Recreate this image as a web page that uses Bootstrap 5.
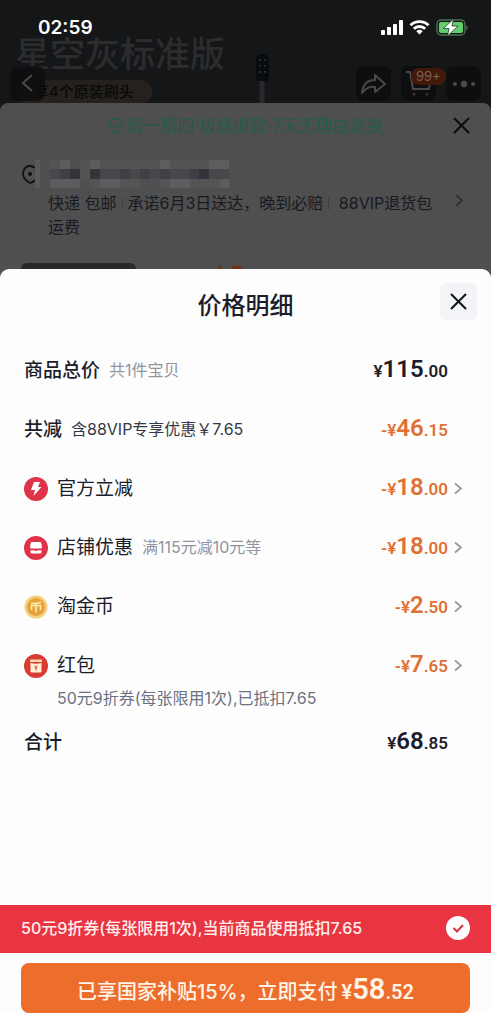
<!DOCTYPE html>
<html lang="zh-CN">
<head>
<meta charset="utf-8">
<meta name="viewport" content="width=device-width, initial-scale=1">
<title>价格明细</title>
<link href="https://cdn.jsdelivr.net/npm/bootstrap@5.3.0/dist/css/bootstrap.min.css" rel="stylesheet">
<style>
  body { font-family: Inter, "Noto Sans CJK SC", sans-serif; color: #1b1d2b; background: #fff; padding-right: 9px; }
  svg { display: block; flex: none; }
  button { border: 0; padding: 0; background: none; color: inherit; }
  .app { min-height: 100vh; background: #4f4f4f; }
  .hero { height: 103px; background: #151618; }
  .clock { font-size: 19px; line-height: 24px; font-weight: 600; color: #fff; top: 16px; left: 38px; }
  .signals { top: 19px; right: 21px; gap: 6px; }
  .hero-title { font-size: 35px; line-height: 40px; font-weight: 500; color: #2b2c2e; padding: 34px 0 0 15px; }
  .gift { font-size: 15px; line-height: 23px; font-weight: 500; color: #08090a; background: #26211d; border-radius: 11px; margin: 6px 0 0 16px; padding: 0 18px; }
  .brush { left: 51%; top: 52px; }
  .toolbar { top: 66px; left: 10px; right: 10px; color: #48494b; }
  .tool { width: 35px; height: 35px; border-radius: 8px; background: rgba(12, 13, 15, .8); display: flex; align-items: center; justify-content: center; }
  .tool-group { gap: 10px; }
  .count { top: 2px; left: 10px; padding: 0 5px; font-size: 13px; line-height: 17px; border-radius: 8px; background: #411a0c; color: #806052; }
  .under { background: #4f4f4f; border-radius: 8px 8px 0 0; margin-top: -8px; position: relative; }
  .hero-pad { height: 111px; }
  .promise { height: 45px; font-size: 17px; line-height: 24px; color: #265c48; gap: 2px; }
  .promise-close { top: 14px; right: 21px; color: #0c0c0d; }
  .delivery { padding: 11px 26px 0 21px; }
  .delivery-text { font-size: 16px; line-height: 24px; color: #191922; padding: 2px 30px 0 27px; }
  .bar { display: inline-block; width: 1px; height: 13px; background: #404044; margin: 0 5px; vertical-align: -1px; }
  .delivery-go { right: 27px; top: 45px; }
  .goods { height: 6px; margin-top: 24px; gap: 78px; padding-left: 21px; }
  .thumb { width: 115px; background: #29292c; border-radius: 6px 6px 0 0; }
  .sheet { background: #fdfdfd; border-radius: 9px 9px 0 0; flex: 1; }
  .sheet-head { height: 73px; }
  .sheet-head h1 { font-size: 24px; line-height: 32px; font-weight: 500; }
  .close-box { top: 14px; right: 14px; width: 37px; height: 37px; border-radius: 5px; background: #f2f4f8; display: flex; align-items: center; justify-content: center; }
  .lines { padding: 14px 24px 60px; }
  .line { height: 29px; margin-bottom: 30px; width: 100%; text-align: left; font-size: 19px; line-height: 29px; }
  .line.total-line { margin-bottom: 0; }
  .line strong { font-weight: 500; }
  .line .note { font-size: 16px; margin-left: 9px; color: #9194a1; }
  .line .note-dark { color: #353846; }
  .line .icon { margin-right: 9px; }
  .line .go { margin-left: 6px; margin-right: 4px; }
  .amount { font-family: Roboto, "Liberation Sans", sans-serif; font-weight: 600; font-size: 17px; }
  .amount b { font-weight: 600; font-size: 24px; }
  .flat { margin-right: 19px; }
  .minus { color: #df7135; }
  .line.packet { margin-bottom: 6px; }
  .detail { font-size: 16px; line-height: 24px; color: #6c7282; padding-left: 33px; margin-bottom: 18px; }
  .coupon { background: #e93442; color: #fff0ee; font-size: 16px; line-height: 22px; font-weight: 500; height: 48px; padding: 0 21px 2px; }
  .pay-wrap { background: #fdfdfd; padding: 10px 21px 0; }
  .pay { width: 100%; height: 50px; border-radius: 8px; background: #ed6d2c; color: #fff4e6; font-size: 20px; line-height: 30px; font-weight: 500; padding-top: 4px; }
  .pay .amount { font-size: 20px; margin-left: 4px; }
  .pay .amount b { font-size: 29px; }
</style>
</head>
<body>
<div class="app d-flex flex-column">
  <header class="hero hero-pad position-relative">
    <div class="hero-title">星空灰标准版</div>
    <span class="gift d-inline-block">享4个原装刷头</span>
    <svg class="brush position-absolute" width="26" height="51"><rect x="6" y="2" width="13" height="28" rx="6" fill="#080b10"/><path d="M9 8h2M14 8h2M9 14h2M14 14h2M9 20h2M14 20h2" stroke="#252a31" stroke-width="2"/><path d="M12 29v22" stroke="#26282b" stroke-width="5"/></svg>
    <span class="clock position-absolute">02:59</span>
    <div class="signals position-absolute d-flex">
      <svg width="22" height="17" fill="#fff"><rect x="0" y="11" width="4" height="5" rx="1"/><rect x="6" y="8" width="4" height="8" rx="1"/><rect x="12" y="5" width="4" height="11" rx="1"/><rect x="18" y="1" width="4" height="15" rx="1"/></svg>
      <svg width="21" height="17" viewBox="0 0 21 17" fill="none" stroke="#fff" stroke-width="2.8"><path d="M1.5 6.2a13 13 0 0 1 18 0M4.8 9.8a8.2 8.2 0 0 1 11.4 0"/><path d="M10.5 15.5l-3.2-3.3a4.8 4.8 0 0 1 6.4 0z" fill="#fff" stroke="none"/></svg>
      <svg width="34" height="17" viewBox="0 0 34 17"><rect x="1" y="1" width="28" height="15" rx="4" fill="none" stroke="#4a7450" stroke-width="1.4"/><rect x="3" y="3" width="24" height="11" rx="2" fill="#62cf6c"/><path d="M30.500 6.500q2 2 0 4.500z" fill="#858786"/><path d="M17.500 0L7.500 9.500h5.500L11.500 17 22 7h-6z" fill="#fff" stroke="#253c2a" stroke-width=".8"/></svg>
    </div>
    <nav class="toolbar position-absolute d-flex justify-content-between">
      <button class="tool" aria-label="返回"><svg width="20" height="22" fill="none" stroke="currentColor" stroke-width="2"><path d="M14 2L5 10l9 8"/></svg></button>
      <div class="d-flex tool-group">
        <button class="tool" aria-label="分享"><svg width="27" height="24" fill="none" stroke="currentColor" stroke-width="2" stroke-linejoin="round"><path d="M15 3l10 9-10 8v-5C9 14 5 17 2 21 3 12 8 8 15 8z"/></svg></button>
        <button class="tool position-relative" aria-label="购物车"><svg width="27" height="27" fill="none" stroke="currentColor" stroke-width="2"><path d="M1 2h4l3 17h16l2-13H6"/><circle cx="9" cy="24" r="1.500" fill="#4b2c2b" stroke="none"/><circle cx="22" cy="24" r="1.500" fill="#4b2c2b" stroke="none"/></svg><span class="count position-absolute">99+</span></button>
        <button class="tool" aria-label="更多"><svg width="24" height="10" fill="currentColor"><circle cx="3" cy="5" r="2"/><circle cx="12" cy="5" r="3.200"/><circle cx="21" cy="5" r="2"/></svg></button>
      </div>
    </nav>
  </header>

  <section class="under">
    <div class="promise position-relative d-flex align-items-center justify-content-center">
      <svg width="16" height="18" fill="none" stroke="currentColor" stroke-width="1.500" stroke-linejoin="round"><path d="M8 1.500l6 2v5.500c0 3.500-2.500 5.800-6 7.500-3.500-1.700-6-4-6-7.500V3.500zM5 8.500l2.500 2.500L11.500 7"/></svg>
      <span>假一赔四·极速退款·7天无理由退换</span>
      <button class="promise-close position-absolute" aria-label="关闭"><svg width="17" height="17" fill="none" stroke="currentColor" stroke-width="2"><path d="M1 1l15 15M16 1L1 16"/></svg></button>
    </div>
    <div class="delivery position-relative">
      <svg width="210" height="30" aria-hidden="true">
        <path d="M14 21q-3 3-5 3c-3-2-7-4-7-9s3-8 7-8c2 0 4 1 5 2" fill="none" stroke="#111114" stroke-width="1.800"/><circle cx="9" cy="15" r="2" fill="#111114"/>
        <path d="M14 1h5v28h-5z" fill="#595959"/>
        <path d="M29 1h179v28H29z" fill="#545455"/>
        <path d="M39 1h10v10h-10zM69 1h10v10h-10zM139 1h10v10h-10zM188 1h20v10h-20zM29 20h30v9H29zM79 20h20v9H79zM149 20h20v9h-20zM199 20h9v9h-9z" fill="#5d5d60"/>
        <path d="M49 1h10v10H49zM59 20h10v9H59zM119 20h20v9h-20z" fill="#4f4f52"/>
        <path d="M29 10h10v10H29zM79 10h20v10H79zM109 10h10v10h-10zM129 10h10v10h-10zM149 10h19v10h-19zM188 10h20v10h-20z" fill="#47474c"/>
        <path d="M39 10h10v10H39zM99 10h10v10H99zM119 10h10v10h-10zM139 10h10v10h-10zM168 10h10v10h-10z" fill="#3f3f45"/>
        <path d="M49 10h10v10H49zM69 10h10v10H69zM178 10h10v10h-10z" fill="#33333a"/>
      </svg>
      <div class="delivery-text">快递 包邮<i class="bar"></i>承诺6月3日送达，晚到必赔<i class="bar"></i> 88VIP退货包<wbr>运费</div>
      <svg class="delivery-go position-absolute" width="10" height="15" fill="none" stroke="#29292d" stroke-width="1.500"><path d="M2 2l6 5.500L2 13"/></svg>
    </div>
    <div class="goods d-flex">
      <div class="thumb"></div>
      <svg width="32" height="6" fill="none" stroke="#75310f" stroke-width="3"><path d="M4 6l3-3M18 6q4-4 9 0"/></svg>
    </div>
  </section>

  <main class="sheet">
    <div class="sheet-head position-relative d-flex align-items-center justify-content-center">
      <h1 class="m-0">价格明细</h1>
      <button class="close-box position-absolute" aria-label="关闭"><svg width="17" height="17" fill="none" stroke="#11131b" stroke-width="2"><path d="M1 1l15 15M16 1L1 16"/></svg></button>
    </div>
    <div class="lines">
      <div class="line d-flex align-items-center"><strong>商品总价</strong><span class="note">共1件宝贝</span><span class="amount flat ms-auto">¥<b>115</b>.00</span></div>
      <div class="line d-flex align-items-center"><strong>共减</strong><span class="note note-dark">含88VIP专享优惠￥7.65</span><span class="amount minus flat ms-auto">-¥<b>46</b>.15</span></div>
      <button class="line d-flex align-items-center">
        <svg class="icon" width="24" height="24"><circle cx="12" cy="12" r="12" fill="#df3348"/><path d="M10 5h6l-2 5h3.500L9.500 19l1.500-6H7z" fill="#fff"/></svg>
        <span>官方立减</span><span class="amount minus ms-auto">-¥<b>18</b>.00</span>
        <svg class="go" width="9" height="13" fill="none" stroke="#999" stroke-width="1.700"><path d="M1 1.500l6 5-6 5"/></svg>
      </button>
      <button class="line d-flex align-items-center">
        <svg class="icon" width="24" height="24"><circle cx="12" cy="12" r="12" fill="#df3348"/><path d="M8 6h8q1 0 1.300 1l.7 4q0 1.500-1.500 1.500h-9Q6 12.500 6 11l.7-4Q7 6 8 6z" fill="#fff"/><path d="M6.500 14q1.500 1 3 0 1.200 1 2.500 1t2.500-1q1.500 1 3 0v2q0 1.500-1.500 1.500H8q-1.500 0-1.500-1.500z" fill="#fff"/></svg>
        <span>店铺优惠</span><span class="note">满115元减10元等</span><span class="amount minus ms-auto">-¥<b>18</b>.00</span>
        <svg class="go" width="9" height="13" fill="none" stroke="#999" stroke-width="1.700"><path d="M1 1.500l6 5-6 5"/></svg>
      </button>
      <button class="line d-flex align-items-center">
        <svg class="icon" width="24" height="24"><circle cx="12" cy="12" r="11.500" fill="#f5cf7c"/><circle cx="12" cy="12" r="9" fill="#e5a33f"/><path d="M7 8.500q5 0 10-1M12 8v9.500M7.500 15v-4.500h9V15" fill="none" stroke="#ffe9a8" stroke-width="1.600" stroke-linejoin="round"/></svg>
        <span>淘金币</span><span class="amount minus ms-auto">-¥<b>2</b>.50</span>
        <svg class="go" width="9" height="13" fill="none" stroke="#999" stroke-width="1.700"><path d="M1 1.500l6 5-6 5"/></svg>
      </button>
      <button class="line packet d-flex align-items-center">
        <svg class="icon" width="24" height="24"><circle cx="12" cy="12" r="12" fill="#da3b33"/><path d="M6 5.500h12v2.500H6z" fill="#fbd9b5"/><path d="M6.500 9q5.500 1.500 11 0v8.500q0 1-1 1h-9q-1 0-1-1z" fill="#fff0d5"/><path d="M10.500 11.500l1.500 1.500 1.500-1.500M12 13v3.500M10.500 14h3" fill="none" stroke="#d65540"/></svg>
        <span>红包</span><span class="amount minus ms-auto">-¥<b>7</b>.65</span>
        <svg class="go" width="9" height="13" fill="none" stroke="#999" stroke-width="1.700"><path d="M1 1.500l6 5-6 5"/></svg>
      </button>
      <div class="detail">50元9折券(每张限用1次),已抵扣7.65</div>
      <div class="line total-line d-flex align-items-center"><strong>合计</strong><span class="amount flat ms-auto">¥<b>68</b>.85</span></div>
    </div>
  </main>

  <div class="coupon d-flex align-items-center justify-content-between">
    <span>50元9折券(每张限用1次),当前商品使用抵扣7.65</span>
    <svg width="24" height="24"><circle cx="12" cy="12" r="12" fill="#fff"/><path d="M7.500 12l3.500 3.500L17 9" fill="none" stroke="#d93243" stroke-width="2"/></svg>
  </div>
  <div class="pay-wrap"><button class="pay">已享国家补贴15%，立即支付<span class="amount">¥<b>58</b>.52</span></button></div>
</div>
<script src="https://cdn.jsdelivr.net/npm/bootstrap@5.3.0/dist/js/bootstrap.bundle.min.js"></script>
</body>
</html>
